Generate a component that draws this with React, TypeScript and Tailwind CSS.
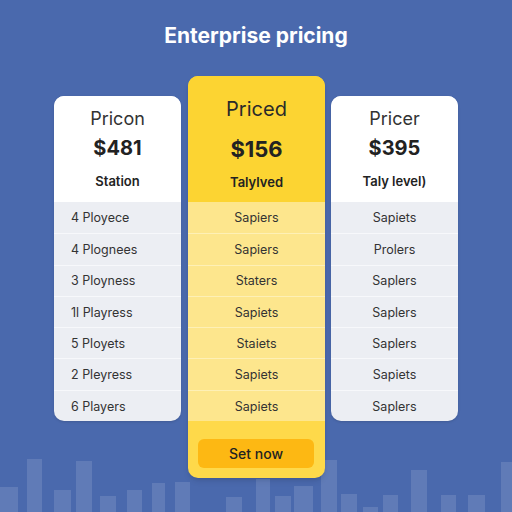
const bars = [
  { x: 0, w: 18, top: 487 },
  { x: 27, w: 15, top: 459 },
  { x: 54, w: 17, top: 490 },
  { x: 76, w: 16, top: 461 },
  { x: 100, w: 16, top: 496 },
  { x: 127, w: 15, top: 490 },
  { x: 152, w: 13, top: 483 },
  { x: 175, w: 15, top: 482 },
  { x: 226, w: 16, top: 497 },
  { x: 256, w: 14, top: 479 },
  { x: 275, w: 16, top: 496 },
  { x: 294, w: 19, top: 486 },
  { x: 321, w: 16, top: 460 },
  { x: 341, w: 16, top: 494 },
  { x: 363, w: 15, top: 507 },
  { x: 383, w: 15, top: 495 },
  { x: 411, w: 16, top: 470 },
  { x: 441, w: 15, top: 495 },
  { x: 468, w: 17, top: 495 },
  { x: 501, w: 11, top: 462 },
];

const left = {
  name: "Pricon",
  price: "$481",
  tag: "Station",
  rows: ["4 Ployece", "4 Plognees", "3 Ployness", "1l Playress", "5 Ployets", "2 Pleyress", "6 Players"],
};

const right = {
  name: "Pricer",
  price: "$395",
  tag: "Taly level)",
  rows: ["Sapiets", "Prolers", "Saplers", "Saplers", "Saplers", "Sapiets", "Saplers"],
};

const middleRows = ["Sapiers", "Sapiers", "Staters", "Sapiets", "Staiets", "Sapiets", "Sapiets"];

function SideCard({ plan, align }: { plan: typeof left; align: "left" | "center" }) {
  return (
    <div className="mt-[20px] w-[127px] overflow-hidden rounded-[10px] bg-[#eceef3] shadow-sm">
      <div className="flex h-[106px] flex-col items-center bg-white pt-[11px] text-[#2b2b2b]">
        <div className="text-[18px] leading-[24px] text-[#333]">{plan.name}</div>
        <div className="mt-[3px] text-[20px] font-bold leading-[28px] text-[#222]">{plan.price}</div>
        <div className="mt-[10px] text-[13px] font-semibold leading-[18px] text-[#222]">{plan.tag}</div>
      </div>
      {plan.rows.map((r, i) => (
        <div
          key={i}
          className={`flex h-[31.3px] items-center pt-[2px] text-[12.5px] text-[#333] ${
            i > 0 ? "border-t border-[#f7f8fb]" : ""
          } ${align === "left" ? "pl-[17px]" : "justify-center"}`}
        >
          {r}
        </div>
      ))}
    </div>
  );
}

export default function App() {
  return (
    <div
      className="relative h-[512px] w-[512px] overflow-hidden bg-[#4a69ad]"
      style={{ fontFamily: "Inter, 'Noto Sans', sans-serif" }}
    >
      <svg className="absolute inset-0" width="512" height="512">
        {bars.map((b, i) => (
          <rect key={i} x={b.x} y={b.top} width={b.w} height={512 - b.top} fill="#ffffff" fillOpacity="0.12" />
        ))}
      </svg>
      <div className="relative flex flex-col items-center">
        <h1 className="mt-[22px] text-[21px] font-bold leading-[28px] text-white">Enterprise pricing</h1>
        <div className="mt-[26px] flex items-start">
          <SideCard plan={left} align="left" />
          <div className="ml-[7px] mr-[6px] w-[137px] overflow-hidden rounded-[10px] bg-[#fed94a] shadow-md">
            <div className="flex h-[126px] flex-col items-center bg-[#fcd432] pt-[20px] text-[#2a2a2a]">
              <div className="text-[20px] leading-[26px]">Priced</div>
              <div className="mt-[12px] text-[22px] font-bold leading-[30px] text-[#222]">$156</div>
              <div className="mt-[9px] text-[13px] font-semibold leading-[18px] text-[#222]">Talylved</div>
            </div>
            {middleRows.map((r, i) => (
              <div
                key={i}
                className={`flex h-[31.3px] items-center justify-center bg-[#fde68d] pt-[2px] text-[12.5px] text-[#333] ${
                  i > 0 ? "border-t border-[#fef0b6]" : ""
                }`}
              >
                {r}
              </div>
            ))}
            <div className="px-[10px] pb-[10px] pt-[18px]">
              <button className="flex h-[29px] w-[116px] items-center justify-center rounded-[6px] bg-[#fdb813] text-[14px] font-medium text-[#222]">
                Set now
              </button>
            </div>
          </div>
          <SideCard plan={right} align="center" />
        </div>
      </div>
    </div>
  );
}
